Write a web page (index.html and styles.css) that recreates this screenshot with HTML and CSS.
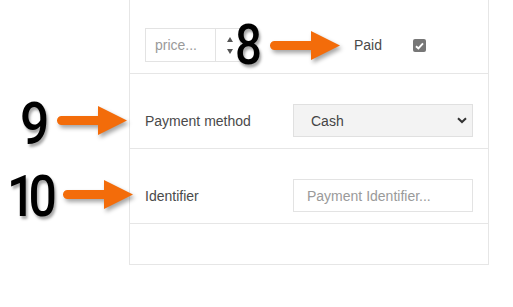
FILE: index.html
```html
<!DOCTYPE html>
<html lang="en">
<head>
    <meta charset="UTF-8">
    <title>Payment</title>
    <link rel="stylesheet" href="styles.css">
</head>
<body>
<div class="page">
    <div class="panel">
        <div class="row row-top">
            <div class="price">
                <span class="price-text">price...</span>
                <span class="spin"><i class="up"></i><i class="down"></i></span>
            </div>
            <span class="label paid">Paid</span>
            <span class="check">
                <svg width="9" height="8" viewBox="0 0 9 8"><path d="M1 4.2 L3.4 6.5 L8 1.3" fill="none" stroke="#fff" stroke-width="1.9"/></svg>
            </span>
        </div>
        <div class="row">
            <span class="label">Payment method</span>
            <div class="field select">
                <span>Cash</span>
                <svg width="10" height="7" viewBox="0 0 10 7"><path d="M1 1.2 L5 5 L9 1.2" fill="none" stroke="#333" stroke-width="2"/></svg>
            </div>
        </div>
        <div class="row">
            <span class="label">Identifier</span>
            <div class="field input">Payment Identifier...</div>
        </div>
        <div class="row row-empty"></div>
    </div>

    <!-- callouts -->
    <span class="num n8">8</span>
    <span class="num n9">9</span>
    <span class="num n10">10</span>
    <svg class="arrow a8" width="74" height="32" viewBox="0 0 74 32"><path d="M5.5 11 H42 V1 L71 15.5 L42 30 V20 H5.5 A4.5 4.5 0 0 1 5.5 11 Z"/></svg>
    <svg class="arrow a9" width="74" height="32" viewBox="0 0 74 32"><path d="M5.5 11 H42 V1 L71 15.5 L42 30 V20 H5.5 A4.5 4.5 0 0 1 5.5 11 Z"/></svg>
    <svg class="arrow a10" width="74" height="32" viewBox="0 0 74 32"><path d="M5.5 11 H42 V1 L71 15.5 L42 30 V20 H5.5 A4.5 4.5 0 0 1 5.5 11 Z"/></svg>
</div>
</body>
</html>
```

FILE: styles.css
```css
*{
    padding: 0;
    margin: 0;
    box-sizing: border-box;
}
body{
    background: #fff;
    font-family: "Liberation Sans", Arial, sans-serif;
    font-size: 14px;
    color: #4a4a4a;
}
.page{
    position: relative;
    width: 513px;
    height: 307px;
}
.panel{
    margin-left: 129px;
    width: 360px;
    border: 1px solid #e6e6e6;
    border-top: none;
}
.row{
    display: flex;
    align-items: center;
    padding: 30px 15px 11px;
    border-bottom: 1px solid #e6e6e6;
}
.row-top{
    margin-top: -2px;
}
.row-empty{
    height: 40px;
    padding: 0;
    border-bottom: none;
}
.label{
    flex: 1;
}
.field{
    width: 180px;
    height: 33px;
    display: flex;
    align-items: center;
}
.select{
    background: #f3f3f3;
    border: 1px solid #e0e0e0;
    padding: 0 5px 0 17px;
    justify-content: space-between;
    color: #444;
}
.input{
    border: 1px solid #e3e3e3;
    padding-left: 13px;
    color: #9a9a9a;
}
.price{
    width: 96px;
    height: 34px;
    border: 1px solid #e3e3e3;
    display: flex;
    align-items: center;
}
.price-text{
    width: 69px;
    padding-left: 9px;
    color: #9a9a9a;
}
.spin{
    height: 100%;
    border-left: 1px solid #e3e3e3;
    display: flex;
    flex-direction: column;
    justify-content: center;
    gap: 7px;
    padding-left: 11px;
}
.spin i{
    display: block;
    width: 0;
    height: 0;
    border-left: 3px solid transparent;
    border-right: 3px solid transparent;
}
.spin .up{
    border-bottom: 5px solid #555;
}
.spin .down{
    border-top: 5px solid #555;
}
.paid{
    flex: none;
    margin-left: 113px;
}
.check{
    margin-left: 31px;
    width: 13px;
    height: 13px;
    border-radius: 2px;
    background: #777;
    display: flex;
    align-items: center;
    justify-content: center;
    margin-top: 1px;
}
.num{
    position: absolute;
    font-family: Roboto, sans-serif;
    font-weight: 500;
    line-height: 1;
    color: #000;
    text-shadow: 2px 3px 3px rgba(0,0,0,.35);
    transform: scaleX(.86);
    transform-origin: left top;
}
.n8{
    font-size: 55px;
    left: 235px;
    top: 20px;
}
.n9{
    font-size: 60px;
    left: 20px;
    top: 96px;
}
.n10{
    font-size: 58px;
    left: 7px;
    top: 169px;
    letter-spacing: -8px;
}
.arrow{
    position: absolute;
    fill: #f36c0a;
    filter: drop-shadow(2px 3px 2px rgba(0,0,0,.35));
}
.a8{
    left: 269px;
    top: 32px;
}
.a9{
    left: 56px;
    top: 107px;
}
.a10{
    left: 62px;
    top: 181px;
}
```
